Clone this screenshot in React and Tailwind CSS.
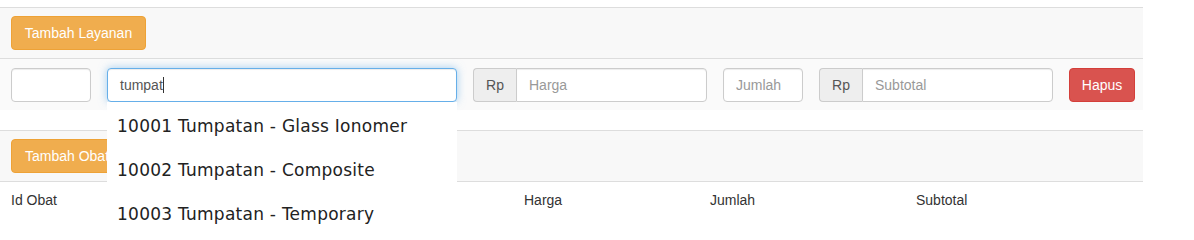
import React from "react";

const Addon = ({ placeholder }) => (
  <div className="flex shrink-0 w-[234px] h-[34px]">
    <span className="flex items-center justify-center w-[43px] border border-[#ccc] border-r-0 rounded-l bg-[#eee] text-[14px] text-[#555]">
      Rp
    </span>
    <input
      className="flex-1 min-w-0 border border-[#ccc] rounded-r px-3 text-[14px] text-[#555] placeholder-[#999] bg-white shadow-[inset_0_1px_1px_rgba(0,0,0,0.075)] outline-none"
      placeholder={placeholder}
    />
  </div>
);

const items = [
  "10001 Tumpatan - Glass Ionomer",
  "10002 Tumpatan - Composite",
  "10003 Tumpatan - Temporary",
];

export default function App() {
  return (
    <div className="w-[1194px] h-[240px] overflow-hidden bg-white text-[14px] text-[#333] font-['Liberation_Sans',Arial,sans-serif]">
      <div className="h-[7px]" />
      <div className="w-[1143px]">
        {/* layanan header */}
        <div className="h-[52px] border-t border-b border-[#ddd] bg-[#f8f8f8] px-[11px] pt-[8px]">
          <button className="w-[135px] h-[34px] rounded border border-[#eea236] bg-[#f0ad4e] text-white">
            Tambah Layanan
          </button>
        </div>

        {/* input row */}
        <div className="relative h-[51px] bg-[#fafafa] flex gap-4 pl-[11px] pt-[9px]">
          <input className="shrink-0 w-[80px] h-[34px] border border-[#ccc] rounded bg-white shadow-[inset_0_1px_1px_rgba(0,0,0,0.075)]" />
          <div className="relative shrink-0 w-[350px]">
            <div className="w-[350px] h-[34px] border border-[#66afe9] rounded bg-white px-3 flex items-center text-[14px] text-[#555] shadow-[inset_0_1px_1px_rgba(0,0,0,0.075),0_0_8px_rgba(102,175,233,0.6)]">
              tumpat<span className="w-px h-[16px] bg-[#333]" />
            </div>
            <ul className="absolute left-0 top-[34px] w-[350px] bg-white z-10 font-['DejaVu_Sans',Verdana,sans-serif] text-[17px] tracking-[0.25px] text-[#222] pt-[14px]">
              {items.map((t) => (
                <li key={t} className="h-[44px] px-[10px] leading-[20px]">
                  {t}
                </li>
              ))}
            </ul>
          </div>
          <Addon placeholder="Harga" />
          <input
            className="shrink-0 w-[80px] h-[34px] border border-[#ccc] rounded bg-white px-3 text-[14px] placeholder-[#999] shadow-[inset_0_1px_1px_rgba(0,0,0,0.075)]"
            placeholder="Jumlah"
          />
          <Addon placeholder="Subtotal" />
          <button className="shrink-0 w-[66px] h-[34px] rounded border border-[#d43f3a] bg-[#d9534f] text-white">
            Hapus
          </button>
        </div>
        <div className="h-[20px]" />

        {/* obat header */}
        <div className="h-[52px] border-t border-b border-[#ddd] bg-[#f8f8f8] px-[11px] pt-[8px]">
          <button className="h-[34px] px-[13px] rounded border border-[#eea236] bg-[#f0ad4e] text-white">
            Tambah Obat
          </button>
        </div>

        {/* table head */}
        <div className="flex pt-[8px] h-[40px]">
          <div className="w-[524px] pl-[11px]">Id Obat</div>
          <div className="w-[186px]">Harga</div>
          <div className="w-[206px]">Jumlah</div>
          <div>Subtotal</div>
        </div>
      </div>
    </div>
  );
}
